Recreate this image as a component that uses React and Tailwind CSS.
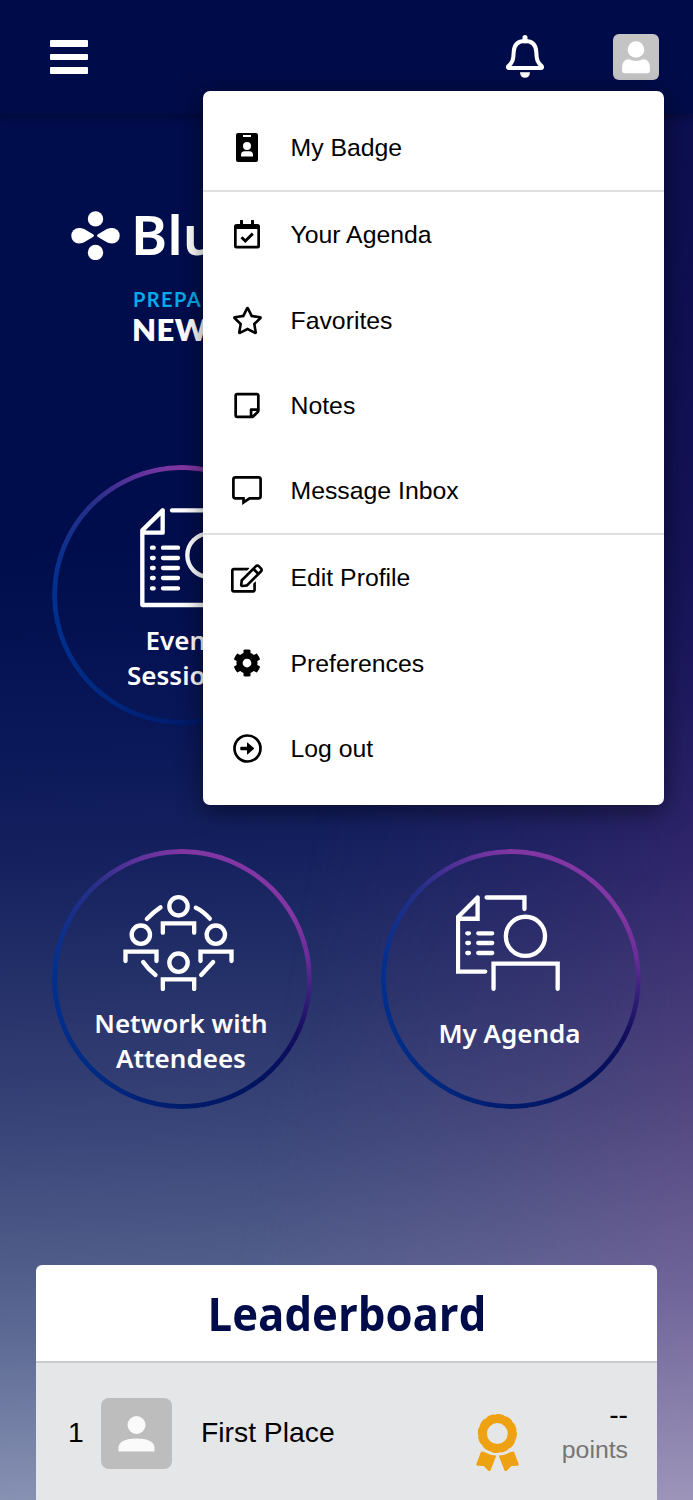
import React from "react";
import { FaRegStar, FaRegStickyNote, FaRegEdit, FaCog } from "react-icons/fa";

const BadgeIcon = () => (
  <svg viewBox="0 0 22 29" className="w-[22px] h-[29px]">
    <path
      fillRule="evenodd"
      d="M2 0H20Q22 0 22 2V27Q22 29 20 29H2Q0 29 0 27V2Q0 0 2 0ZM7 2V4H15V2ZM11 9A4 4 0 1 0 11 17A4 4 0 1 0 11 9ZM5 23.5H17V22Q17 18.3 13.5 18.2H8.5Q5 18.3 5 22Z"
    />
  </svg>
);

const CalendarIcon = () => (
  <svg viewBox="0 0 26 29" className="w-[26px] h-[29px]">
    <path
      fillRule="evenodd"
      d="M6 .6Q6 0 6.6 0H8.4Q9 0 9 .6V4H17V.6Q17 0 17.6 0H19.4Q20 0 20 .6V4H23.5Q26 4 26 6.500V26Q26 28.500 23.500 28.500H2.500Q0 28.500 0 26V6.500Q0 4 2.500 4H6ZM2.700 9V25.800H23.300V9Z"
    />
    <path d="M7.500 17.200L11.300 21L18.800 13.600" fill="none" stroke="black" strokeWidth="2.900" />
  </svg>
);

const MessageIcon = () => (
  <svg viewBox="0 0 30 29" className="w-[30px] h-[29px]" fill="none" stroke="black" strokeWidth="2.700">
    <path d="M3.500 1.400H26.500Q28.600 1.400 28.600 3.500V20.300Q28.600 22.400 26.500 22.400H17.500L11.500 26.400V22.400H3.500Q1.400 22.400 1.400 20.300V3.500Q1.400 1.400 3.500 1.400Z" />
  </svg>
);

const LogoutIcon = () => (
  <svg viewBox="0 0 29 29" className="w-[29px] h-[29px]">
    <circle cx="14.500" cy="14.500" r="13" fill="none" stroke="black" strokeWidth="2.700" />
    <path d="M8 12.800H14V9Q14 8 14.800 8.700L20.800 14Q21.300 14.500 20.800 15L14.800 20.300Q14 21 14 20V16.200H8Q7.300 16.200 7.300 15.500V13.500Q7.300 12.800 8 12.800Z" />
  </svg>
);

const menuGroups = [
  [{ label: "My Badge", icon: <BadgeIcon /> }],
  [
    { label: "Your Agenda", icon: <CalendarIcon /> },
    { label: "Favorites", icon: <FaRegStar className="w-[31px] h-[29px]" /> },
    { label: "Notes", icon: <FaRegStickyNote className="w-[26px] h-[29px]" /> },
    { label: "Message Inbox", icon: <MessageIcon /> },
  ],
  [
    { label: "Edit Profile", icon: <FaRegEdit className="w-[32px] h-[29px]" /> },
    { label: "Preferences", icon: <FaCog className="w-[28px] h-[28px]" /> },
    { label: "Log out", icon: <LogoutIcon /> },
  ],
];

const ProfileMenu = () => (
  <div className="absolute right-[-5px] top-[57px] z-20 w-[461px] h-[714px] rounded-[7px] bg-white pt-[14px] text-black shadow-[0_6px_24px_rgba(0,0,0,0.5)]">
    {menuGroups.map((group, i) => (
      <div key={i} className={i > 0 ? "border-t-2 border-[#e0e0e0]" : ""}>
        {group.map((item) => (
          <div key={item.label} className="flex items-center h-[85.3px]">
            <span className="flex justify-center w-[88px] -mr-[0.500px]">{item.icon}</span>
            <span className="pt-[1.500px] text-[24.800px] leading-none whitespace-nowrap">{item.label}</span>
          </div>
        ))}
      </div>
    ))}
  </div>
);

const Header = () => (
  <header className="relative z-10 flex items-start h-[114px] bg-[#000c49] pl-[50px] pr-[34px] shadow-[0_3px_8px_rgba(0,0,0,0.3)]">
    <div className="flex flex-col gap-[7px] mt-[40px]">
      <span className="w-[37.500px] h-[6.500px] rounded-[1px] bg-white" />
      <span className="w-[37.500px] h-[6.500px] rounded-[1px] bg-white" />
      <span className="w-[37.500px] h-[6.500px] rounded-[1px] bg-white" />
    </div>
    <svg viewBox="0 0 38 43" className="w-[38px] h-[43px] mt-[35px] ml-auto">
      <path
        d="M19 6C11.500 6 8 10.500 7.700 17C7.400 25 6.500 27.500 2.200 31.300Q1.500 33 3 33H35Q36.500 33 35.800 31.300C31.500 27.500 30.600 25 30.300 17C30 10.500 26.500 6 19 6Z"
        fill="none"
        stroke="white"
        strokeWidth="4"
        strokeLinejoin="round"
      />
      <path d="M19 2.500V6" stroke="white" strokeWidth="5" strokeLinecap="round" />
      <path d="M14 37.300H24Q23.500 42.800 19 42.800Q14.500 42.800 14 37.300Z" fill="white" />
    </svg>
    <div className="relative mt-[34px] ml-[69px] w-[46px] h-[46px]">
      <div className="w-full h-full rounded-[6px] bg-[#c4c4c4]">
        <svg viewBox="0 0 46 46" className="w-full h-full" fill="white">
          <circle cx="23" cy="15.500" r="8.300" />
          <path d="M9 36V34Q9 25.500 16 25.300Q23 28.500 30 25.300Q37 25.500 37 34V36Q37 39.300 34 39.300H12Q9 39.300 9 36Z" />
        </svg>
      </div>
      <ProfileMenu />
    </div>
  </header>
);

const Logo = () => (
  <div className="flex h-[170px] mt-[97px] ml-[71px] text-white">
    <svg viewBox="0 0 49 49" className="w-[49px] h-[49px] shrink-0" fill="white">
      <circle cx="24.500" cy="7.900" r="7.700" />
      <circle cx="24.500" cy="41.500" r="7.700" />
      <path d="M8 17C10.500 17 12 17.500 14 18.500L22 23.300Q24 24.700 22 26L14 30.800C12 31.800 10.500 32.500 8 32.500A7.700 7.700 0 0 1 8 17Z" />
      <path d="M41 17C38.500 17 37 17.500 35 18.500L27 23.300Q25 24.700 27 26L35 30.800C37 31.800 38.500 32.500 41 32.500A7.700 7.700 0 0 0 41 17Z" />
    </svg>
    <div className="ml-[13px]">
      <div className="text-[55px] leading-[46px] -ml-[2px] font-semibold font-['Noto_Sans',sans-serif]">Blu</div>
      <div className="mt-[30px] text-[20px] leading-[24px] font-bold tracking-[1.400px] text-[#00a9e8] font-['Lato',sans-serif]">PREPA</div>
      <div className="mt-[2px] -ml-px text-[31px] leading-[32px] font-extrabold tracking-[0.500px] font-['Lato',sans-serif]">NEW</div>
    </div>
  </div>
);

const EventIcon = () => (
  <svg viewBox="300 174 300 300" className="w-[100px] h-[100px] ml-[16px]" fill="none" stroke="white" strokeWidth="13" strokeLinecap="round" strokeLinejoin="round">
    <path d="M368 181L307 241V465H594V181H396M368 181V248H307" />
    <circle cx="507" cy="316" r="65" />
    <path d="M336 293h5M369 293h45M336 324h5M369 324h45M336 354h5M369 354h45M336 384h5M369 384h45M336 415h5M369 415h45" />
  </svg>
);

const NetworkIcon = () => (
  <svg viewBox="250 165 332 288" className="w-[111px] h-[96px] -ml-[7px]" fill="none" stroke="white" strokeWidth="13" strokeLinecap="round">
    <circle cx="416" cy="199" r="27.500" />
    <circle cx="303" cy="284" r="27.500" />
    <circle cx="528" cy="284" r="27.500" />
    <circle cx="416" cy="368" r="27.500" />
    <path d="M369 278V250H463V278M257 363V335H350V363M482 363V335H575V363M369 447V418H463V447" />
    <path d="M321 237Q342 215 362 202M468 203Q490 213 510 236M310 366Q325 388 347 405M520 366L484 405" />
  </svg>
);

const AgendaIcon = () => (
  <svg viewBox="257 165 313 288" className="w-[104px] h-[96px] -ml-[6px]" fill="none" stroke="white" strokeWidth="13" strokeLinecap="round">
    <path d="M322 172L263 231V395H345M322 172V236H263M349 172H463V207" />
    <circle cx="466" cy="289" r="59" />
    <path d="M370 447V371H563V447" />
    <path d="M291 280h5M324 280h42M291 309h5M324 309h42M291 339h5M324 339h42" />
  </svg>
);

const CircleButton = ({ icon, lines, className, textClassName }) => (
  <div className={`relative flex flex-col items-center w-[260px] h-[260px] ${className}`}>
    <div className="absolute inset-0 rounded-full bg-[conic-gradient(#8236a3_0deg,#8236a3_60deg,#6a2d99_80deg,#35207a_97deg,#140d5e_115deg,#00125e_140deg,#001c6c_180deg,#002b84_225deg,#003090_275deg,#252f88_315deg,#5f339c_340deg,#8236a3_360deg)] [mask-image:radial-gradient(circle,transparent_124.500px,black_125.500px)]" />
    {icon}
    <div className={`flex flex-col items-center text-center text-[26px] leading-[35px] font-semibold text-white font-['Noto_Sans',sans-serif] ${textClassName}`}>
      {lines.map((line) => (
        <span key={line} className="whitespace-nowrap">{line}</span>
      ))}
    </div>
  </div>
);

const Leaderboard = () => (
  <section className="mx-[36px] mt-[156px] h-[235px] rounded-t-[6px] bg-white overflow-hidden">
    <div className="flex items-center justify-center h-[98px] border-b-2 border-[#c9cbcd]">
      <h2 className="text-[47px] leading-none font-bold text-[#000c49] scale-x-[0.93] font-['Open_Sans',sans-serif]">Leaderboard</h2>
    </div>
    <div className="flex h-[137px] bg-[#e5e6e8] pl-[32px] pr-[29px] pt-[35px] text-black">
      <span className="w-[33px] text-[28.300px] leading-[69px]">1</span>
      <div className="w-[71px] h-[71px] rounded-[8px] bg-[#bdbdbd]">
        <svg viewBox="0 0 71 71" className="w-full h-full" fill="#fafafa">
          <circle cx="35.500" cy="27" r="9" />
          <path d="M17.500 53.500V49Q19 40.500 35.500 40.500Q52 40.500 53.500 49V53.500Z" />
        </svg>
      </div>
      <span className="ml-[29px] text-[28.300px] leading-[69px] whitespace-nowrap">First Place</span>
      <svg viewBox="78 72 129 172" className="w-[43px] h-[57px] mt-[16px] ml-auto" fill="#efa211">
        <circle cx="142" cy="131" r="44.500" fill="none" stroke="#efa211" strokeWidth="26" />
        <circle cx="142" cy="131" r="52" fill="none" stroke="#efa211" strokeWidth="14" strokeDasharray="13 14.227" strokeLinecap="round" />
        <path d="M93 185Q103 186 110 190Q120 197 139 197L122 241Q118 247 113 242L101 229L82 228Q77 227 79 222ZM192 185Q182 186 175 190Q165 197 146 197L163 241Q167 247 172 242L184 229L203 228Q208 227 206 222Z" />
      </svg>
      <div className="flex flex-col items-end w-[109px] -mt-[2px] text-[24.800px] leading-[36px]">
        <span className="text-[28.300px]">--</span>
        <span className="text-[#757575]">points</span>
      </div>
    </div>
  </section>
);

const App = () => {
  return (
    <div className="relative w-[693px] h-[1500px] overflow-hidden font-['Liberation_Sans',sans-serif] bg-[linear-gradient(178deg,#000d4c_0%,#000d4c_36%,#091658_48%,#16225f_57%,#27336a_66%,#3b477a_75%,#4f5c89_83%,#5e6b95_88%,#8d97b7_100%)]">
      {/* purple glow along the right edge */}
      <div className="absolute inset-0 bg-[linear-gradient(180deg,#1e1459_0%,#1f1359_20%,#261961_42%,#38266f_57%,#554680_73%,#72659a_86%,#9c94b9_100%)] [mask-image:linear-gradient(100deg,transparent_48%,rgba(0,0,0,0.400)_74%,black_98%)]" />
      <div className="relative">
        <Header />
        <Logo />
        <div className="grid grid-cols-2 gap-x-[68px] gap-y-[124px] w-[589px] mt-[84px] ml-[52px]">
          <CircleButton className="pt-[43px]" textClassName="mt-[15px] -ml-[2px]" icon={<EventIcon />} lines={["Event", "Sessions"]} />
          <CircleButton className="col-start-1 row-start-2 pt-[46px]" textClassName="mt-[15px] -ml-[2px]" icon={<NetworkIcon />} lines={["Network with", "Attendees"]} />
          <CircleButton className="row-start-2 pt-[46px]" textClassName="mt-[25px] -ml-[2px]" icon={<AgendaIcon />} lines={["My Agenda"]} />
        </div>
        <Leaderboard />
      </div>
    </div>
  );
};

export default App;
